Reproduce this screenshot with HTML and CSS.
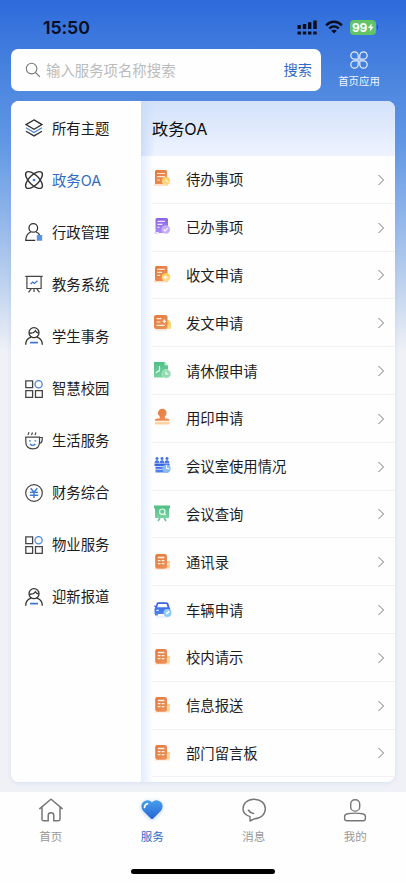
FILE: index.html
```
<!DOCTYPE html>
<html lang="zh-CN">
<head>
<meta charset="utf-8">
<meta name="viewport" content="width=device-width, initial-scale=1">
<title>服务</title>
<link rel="stylesheet" href="styles.css">
</head>
<body>
<svg class="defs" width="0" height="0" aria-hidden="true">
  <defs>
    <linearGradient id="orange" x1="0" y1="0" x2="1" y2="1"><stop offset="0" stop-color="#e3793c"/><stop offset="1" stop-color="#f0925a"/></linearGradient>
    <linearGradient id="yellow" x1="0" y1="0" x2="0" y2="1"><stop offset="0" stop-color="#ffc94d"/><stop offset="1" stop-color="#ffdc92"/></linearGradient>
    <linearGradient id="purple" x1="0" y1="0" x2="0" y2="1"><stop offset="0" stop-color="#8a63e6"/><stop offset="1" stop-color="#ab8af5"/></linearGradient>
    <linearGradient id="green" x1="0" y1="0" x2="0" y2="1"><stop offset="0" stop-color="#4fbe85"/><stop offset="1" stop-color="#7ad3a3"/></linearGradient>
    <linearGradient id="blue" x1="0" y1="0" x2="0" y2="1"><stop offset="0" stop-color="#3462dc"/><stop offset="1" stop-color="#5185ee"/></linearGradient>
    <linearGradient id="heart" x1="0" y1="0" x2="0" y2="1"><stop offset="0" stop-color="#46a0ee"/><stop offset="1" stop-color="#2863d2"/></linearGradient>
    <symbol id="person" viewBox="0 0 18 18"><g fill="none" stroke="#333" stroke-width="1.3"><circle cx="9" cy="5.7" r="5"/><path d="M4.3 6.2C7 6.5 9.3 5.5 10.4 3.8c.7 1.5 1.8 2 3.2 2.2M.7 17.7c0-4 2-6.3 5.3-7.5M17.3 17.7c0-4-2-6.3-5.3-7.5"/></g><path d="M5 15.6h8" stroke="#3e73d3" stroke-width="1.7"/></symbol>
    <symbol id="grid" viewBox="0 0 18 18"><g fill="none" stroke="#444" stroke-width="1.3"><path d="M.8.8h6.8v6.9H.8zM.8 10.6h6.8v6.8H.8zM10.5 10.6h6.8v6.8h-6.8z"/><circle cx="13.6" cy="4.2" r="3.6" stroke="#4d86dc"/></g></symbol>
    <symbol id="news" viewBox="0 0 20 20"><path d="M2 17h16" stroke="#fff0e5" stroke-width="2"/><path d="M14 9h4v5.5a2 2 0 0 1-4 0z" fill="#ffd08a"/><rect x="3.2" y="2" width="11.8" height="14.8" rx="2.2" fill="url(#orange)"/><path d="M5.8 5.5h6.6M5.8 8.7h2.7M9.7 8.7h2.7M5.8 11.6h2.7M9.7 11.6h2.7" stroke="#fff2e8" stroke-width="1.3"/><path d="M16 11v3" stroke="#fff1d4"/></symbol>
    <symbol id="chevron" viewBox="0 0 8 14"><path d="M1.5 2 6.500 7l-5 5" fill="none" stroke="#777" stroke-width="1"/></symbol>
  </defs>
</svg>
<div class="app">
  <header class="status">
    <span class="time">15:50</span>
    <svg class="signal" viewBox="0 0 21 15"><path d="M2.2 5v4M7.500 4v5M12.700 2.300V9M18 .5V9M2.200 11.400v3M7.500 11.400v3M12.700 11.400v3M18 11.400v3" stroke="#080e1e" stroke-width="3.4"/></svg>
    <svg class="wifi" viewBox="0 0 18 14"><g fill="none" stroke="#080e1e" stroke-width="2.4"><path d="M1.200 5.400C5.600.6 12.400.6 16.800 5.400"/><path d="M4.300 8.500c2.800-2.800 6.600-2.800 9.400 0"/></g><path d="m6.200 10.800 2.800 2.800 2.800-2.800c-1.600-1.500-4-1.500-5.600 0z" fill="#080e1e"/></svg>
    <div class="battery"><span>99</span><svg viewBox="0 0 7 10"><path d="M4.300 0 0 5.700h2.700L2 10l4.700-6H4z" fill="#fff"/></svg></div>
  </header>

  <div class="top">
    <div class="search">
      <svg viewBox="0 0 16 16"><g fill="none" stroke="#777" stroke-width="1.1"><circle cx="6.6" cy="6.6" r="5.3"/><path d="m10.5 10.5 4.4 4.4"/></g></svg>
      <span class="placeholder">输入服务项名称搜索</span>
      <span class="go">搜索</span>
    </div>
    <div class="home-apps">
      <svg viewBox="0 0 18 18"><g fill="none" stroke="#e6effc" stroke-width="1.2"><path d="M8.2 8.2H4.5A3.7 3.7 0 1 1 8.2 4.5zM9.8 8.2h3.7a3.7 3.7 0 1 0-3.7-3.7zM8.2 9.8H4.5a3.7 3.7 0 1 0 3.7 3.7zM9.8 9.8h3.7a3.7 3.7 0 1 1-3.7 3.7z"/></g></svg>
      <span>首页应用</span>
    </div>
  </div>

  <main class="card">
    <nav class="themes">
      <div class="theme"><svg viewBox="0 0 18 18"><g fill="none" stroke-width="1.3"><path d="M9 .9 17 5.6 9 10.3 1 5.6z" stroke="#333"/><path d="m1 8.8 8 4.7 8-4.7" stroke="#4d86dc"/><path d="m1 12.2 8 4.7 8-4.7" stroke="#333"/></g></svg><span>所有主题</span></div>
      <div class="theme active"><svg viewBox="0 0 18 18"><g fill="none" stroke="#333" stroke-width="1.4"><ellipse cx="9" cy="9" rx="10.8" ry="4.9" transform="rotate(45 9 9)"/><ellipse cx="9" cy="9" rx="10.8" ry="4.9" transform="rotate(-45 9 9)"/></g><circle cx="9" cy="9" r="1.3" fill="#3d78dc"/></svg><span>政务OA</span></div>
      <div class="theme"><svg viewBox="0 0 18 18"><g fill="none" stroke="#333" stroke-width="1.3"><circle cx="8.3" cy="4.9" r="4.3"/><path d="M5.7 9C2.7 10.4.8 13 .8 17.3h9.5M11 9c1.7.6 2.8 1.5 3.6 2.8"/></g><path d="M11.8 12h5.4v5.8h-5.4z" fill="#5d91df"/></svg><span>行政管理</span></div>
      <div class="theme"><svg viewBox="0 0 18 18"><g fill="none" stroke="#444" stroke-width="1.2"><path d="M.3 1.3h17.4M1.9 1.3v12.2h14.2V1.3M6.2 13.8l-2.7 3.6M11.8 13.8l2.7 3.6M9 14v3"/><path d="m5.700 9 2-1.900 1.700 1.400 3-2.700" stroke="#3e73d3" stroke-width="1.300"/></g></svg><span>教务系统</span></div>
      <div class="theme"><svg><use href="#person"/></svg><span>学生事务</span></div>
      <div class="theme"><svg><use href="#grid"/></svg><span>智慧校园</span></div>
      <div class="theme"><svg viewBox="0 0 18 18"><g fill="none" stroke="#444" stroke-width="1.2"><path d="M.8 5.200h13.700v4.800c0 4.200-2.400 6.900-6.800 6.900S.8 14.200.8 10zM14.500 5.500h2.700v2.300c0 2-1 3.300-3 3.500M3 2.900 4 .3M6.500 3.100 7.500.5M10 3.100 11 .5"/><path d="M4 8.900h1.800M9.500 8.900h1.800M5 12c1.500 1.800 3.800 1.800 5.300 0" stroke="#3e7ee0" stroke-width="1.300"/></g></svg><span>生活服务</span></div>
      <div class="theme"><svg viewBox="0 0 18 18"><g fill="none"><circle cx="9" cy="9" r="8.300" stroke="#444" stroke-width="1.200"/><path d="m5.700 4.300 3.300 4 3.300-4M9 8.300v5.800M4.800 8.400h8.400M4.800 11.200h8.400" stroke="#3e7ad8" stroke-width="1.400"/></g></svg><span>财务综合</span></div>
      <div class="theme"><svg><use href="#grid"/></svg><span>物业服务</span></div>
      <div class="theme"><svg><use href="#person"/></svg><span>迎新报道</span></div>
    </nav>

    <section class="services">
      <h1>政务OA</h1>
      <ul>
        <li><svg class="icon" viewBox="0 0 20 20"><path d="M2 16h14" stroke="#ffe1cb" stroke-width="2"/><path d="M4.500 1h9a1.500 1.500 0 0 1 1.500 1.500V15H3V2.500A1.500 1.500 0 0 1 4.500 1z" fill="url(#orange)"/><path d="M5 4.500h8M5 7.700h8M5 11h3" stroke="#ffe8d8" stroke-width="1.200"/><circle cx="14" cy="12" r="4.200" fill="url(#yellow)"/><path d="M14 9.500v2.700h2.300" fill="none" stroke="#fff"/></svg><span>待办事项</span><svg class="chevron"><use href="#chevron"/></svg></li>
        <li><svg class="icon" viewBox="0 0 20 20"><path d="M5 1h9.500a1.500 1.500 0 0 1 1.500 1.500V16H3.500V2.500A1.500 1.500 0 0 1 5 1z" fill="url(#purple)"/><path d="M2 15h5v2H2z" fill="#e6dbff"/><path d="M5.500 4.300h7.500M5.500 7.300h5M5.500 10.300h2" stroke="#ede5ff" stroke-width="1.200"/><circle cx="13.700" cy="12.500" r="4.300" fill="#c5aef8"/><path d="m11.800 12.500 1.400 1.500 2.700-3" fill="none" stroke="#fff" stroke-width="1.100"/></svg><span>已办事项</span><svg class="chevron"><use href="#chevron"/></svg></li>
        <li><svg class="icon" viewBox="0 0 20 20"><path d="M2 16.500h14" stroke="#ffe1cb" stroke-width="2"/><rect x="3" y="1" width="12.500" height="15" rx="1.500" fill="url(#orange)"/><path d="M5.200 4.300h7.500M5.200 7.300h5M5.200 10.300h3" stroke="#ffe8d8" stroke-width="1.200"/><circle cx="14" cy="12.300" r="4.200" fill="url(#yellow)"/><path d="M16.500 12.300h-4.300m2-2-2 2 2 2" fill="none" stroke="#fff" stroke-width="1.100"/></svg><span>收文申请</span><svg class="chevron"><use href="#chevron"/></svg></li>
        <li><svg class="icon" viewBox="0 0 20 20"><path d="M3 17h12" stroke="#ffe6d4" stroke-width="1.500"/><path d="M14.500 7h2l2.500 2.500V16h-4.500z" fill="url(#yellow)"/><rect x="2" y="2" width="13.500" height="14" rx="2.200" fill="url(#orange)"/><path d="M4.500 5.700h5M4.500 9h4M4.500 12.300h8M10.500 8.300H14M12.300 6.500v3.600" stroke="#fff0e4" stroke-width="1.200"/></svg><span>发文申请</span><svg class="chevron"><use href="#chevron"/></svg></li>
        <li><svg class="icon" viewBox="0 0 20 20"><path d="M2 1h10.500L16 4.500v12H2z" fill="url(#green)"/><path d="M12.500 1v3.500H16" fill="#b9e9ce"/><path d="m4.500 11.500 2-1.500M7.500 10V5.500" stroke="#e9fff2" stroke-width="1.200" stroke-linecap="round"/><circle cx="14.500" cy="12.800" r="4.300" fill="#90dab0" stroke="#d9f6e5" stroke-width=".6"/><path d="M14 10.500V13h2.500" fill="none" stroke="#fff" stroke-width="1.100"/></svg><span>请休假申请</span><svg class="chevron"><use href="#chevron"/></svg></li>
        <li><svg class="icon" viewBox="0 0 20 20"><path d="M7.700 10.500V8.300C6.300 7.300 6 6.200 6 5a4.300 4.300 0 0 1 8.600 0c0 1.300-.5 2.500-1.700 3.300v2.200H15c1.700 0 2.500.8 2.500 2.300H3c0-1.500.8-2.300 2.500-2.300z" fill="url(#orange)"/><path d="M3 13.700h14.500v2.800H3z" fill="#ffd29f"/></svg><span>用印申请</span><svg class="chevron"><use href="#chevron"/></svg></li>
        <li><svg class="icon" viewBox="0 0 20 20"><g fill="url(#blue)"><circle cx="5" cy="2.500" r="1.500"/><circle cx="10" cy="2.500" r="1.500"/><circle cx="15" cy="2.500" r="1.500"/><path d="M2.700 7q0-2.800 2.300-2.800T7.300 7zM7.700 7q0-2.800 2.300-2.800T12.300 7zM12.700 7q0-2.800 2.300-2.800T17.300 7z"/><path d="M2.500 7.500h15v2.500h-15zM3.500 10.800h12.500v5.700H3.500z"/></g><path d="M3 13.300h8" stroke="#c9d8ff"/><circle cx="14.500" cy="12.700" r="4.200" fill="#8abaf8"/><path d="M14.500 9.500v3.200h3" fill="none" stroke="#fff"/></svg><span>会议室使用情况</span><svg class="chevron"><use href="#chevron"/></svg></li>
        <li><svg class="icon" viewBox="0 0 20 20"><path d="M2 1.500h16v3H2zM3 4h14v10H3z" fill="url(#green)"/><path d="m8 14-2 3M12 14l2 3" stroke="#66c493" stroke-width="1.600"/><circle cx="10.300" cy="7.700" r="2.700" fill="none" stroke="#e9fff2" stroke-width="1.100"/><path d="m12.300 9.700 1.500 1.500" stroke="#e9fff2" stroke-width="1.200"/></svg><span>会议查询</span><svg class="chevron"><use href="#chevron"/></svg></li>
        <li><svg class="icon"><use href="#news"/></svg><span>通讯录</span><svg class="chevron"><use href="#chevron"/></svg></li>
        <li><svg class="icon" viewBox="0 0 20 20"><path d="M4 17h11" stroke="#e5eeff" stroke-width="1.500"/><path fill-rule="evenodd" d="M6 2.200h8.500q1.500 0 2 1.500l1 3.500q.8.800.8 2.300v4.500h-2.500v1.500h-2V14H6v1.500H3V14h-.5V9.500q0-1.500.9-2.300L2 6.500l.4-1 1.500.3.700-2.200Q5 2.200 6 2.200zM6.200 3.900 5.200 7.200h10.300l-1-3.300z" fill="url(#blue)"/><path d="M4.500 10.300h2.200M13.500 10.300h2" stroke="#fff" stroke-width="1.300"/><circle cx="15.500" cy="13" r="4" fill="#8fcdf8"/><path d="m13.900 14.600.2-1.500 2.300-2.300 1.200 1.200-2.300 2.300z" fill="#fff"/></svg><span>车辆申请</span><svg class="chevron"><use href="#chevron"/></svg></li>
        <li><svg class="icon"><use href="#news"/></svg><span>校内请示</span><svg class="chevron"><use href="#chevron"/></svg></li>
        <li><svg class="icon"><use href="#news"/></svg><span>信息报送</span><svg class="chevron"><use href="#chevron"/></svg></li>
        <li><svg class="icon"><use href="#news"/></svg><span>部门留言板</span><svg class="chevron"><use href="#chevron"/></svg></li>
      </ul>
    </section>
  </main>

  <footer class="tabbar">
    <div class="tabs">
      <div class="tab"><svg viewBox="0 0 28 28"><path d="M2.800 12.600 13.300 3.700q.7-.6 1.400 0l10.500 8.900M5 11v12.300q0 1.400 1.400 1.400h4.800v-5.200q0-2.700 2.800-2.700t2.800 2.700v5.200h4.800q1.400 0 1.400-1.400V11" fill="none" stroke="#777" stroke-width="1.500" stroke-linecap="round"/></svg><span>首页</span></div>
      <div class="tab active"><svg class="heart" viewBox="0 0 28 28"><path d="M14 6.500C11.500 3 6.800 3.700 4.700 6.600c-2 2.800-1.500 6 .8 8.600l7.300 7.300q1.200 1.200 2.400 0l7.300-7.300c2.300-2.600 2.800-5.800.8-8.600C21.200 3.700 16.500 3 14 6.500z" fill="url(#heart)"/><path d="M6.500 11.500c.1-2.100 1-3.300 3-3.800" fill="none" stroke="#fff" stroke-width="1.700" stroke-linecap="round"/></svg><span>服务</span></div>
      <div class="tab"><svg viewBox="0 0 28 28"><g fill="none" stroke="#777" stroke-width="1.400" stroke-linejoin="round"><path d="M10 20.600C5.800 19.300 3 16.400 3 12.800 3 7.300 7.500 3.200 14 3.200s11.300 4 11.300 9.500S21 22.500 14.800 22.700L10 25z"/><path d="M8.500 14.300c1.300 2 2.700 3 5 3.200" stroke-width="1.700" stroke-linecap="round"/></g></svg><span>消息</span></div>
      <div class="tab"><svg viewBox="0 0 28 28"><g fill="none" stroke="#777" stroke-width="1.400"><rect x="9.700" y="3.700" width="9" height="11.400" rx="4.200"/><path d="M6.500 17.800q7.500-1.400 15 0 2.900.4 2.900 2.900v1.700q0 2.300-2.300 2.300H5.900q-2.300 0-2.300-2.300v-1.700q0-2.500 2.900-2.900z"/></g></svg><span>我的</span></div>
    </div>
    <div class="indicator"></div>
  </footer>
</div>
</body>
</html>
```
FILE: styles.css
```
* { box-sizing: border-box; }
body { margin: 0; font-family: "Noto Sans CJK SC", sans-serif; color: #1c1c1e; }
svg { display: block; flex: none; }
.defs { position: absolute; }
.app {
  width: 406px;
  height: 883px;
  overflow: hidden;
  display: flex;
  flex-direction: column;
  background: linear-gradient(180deg, #2e6bdb 0, #4a84df 75px, #6298e4 145px, #92b7ea 220px, #c2d5ef 290px, #eff1f6 352px);
}

.status { height: 49px; display: flex; align-items: center; padding: 6px 28px 0 43px; }
.time { width: 254px; font: 600 17.800px/22px Inter, sans-serif; color: #080e1e; letter-spacing: -.1px; }
.signal { width: 21px; height: 15px; margin-top: 0; }
.wifi { width: 18px; height: 14px; margin: -1px 0 0 7px; }
.battery {
  position: relative;
  width: 26px;
  height: 15px;
  margin: -1px 0 0 7px;
  border-radius: 4px;
  background: #62c466;
  display: flex;
  align-items: center;
  justify-content: center;
  gap: 1px;
  color: #fff;
  font: 700 12px/15px Inter, sans-serif;
  letter-spacing: -.3px;
}
.battery svg { width: 6px; height: 9px; }
.battery::after { content: ""; position: absolute; right: -2px; top: 5px; width: 1px; height: 4px; background: #2c4d96; }

.top { height: 42px; margin-left: 11px; display: flex; }
.search { width: 310px; border-radius: 7px; background: #fefefe; display: flex; align-items: center; padding: 0 9px 0 14px; }
.search svg { width: 16px; height: 16px; margin-right: 5px; }
.search span { margin-top: -2px; }
.placeholder { flex: 1; font-size: 14.400px; color: #bbb; }
.go { font-size: 14.200px; color: #2f6bc8; }
.home-apps { width: 76px; display: flex; flex-direction: column; align-items: center; padding-top: 2px; color: #f0f5fd; }
.home-apps svg { width: 18px; height: 18px; }
.home-apps span { font-size: 10.400px; line-height: 16px; margin-top: 4px; }

.card { width: 384px; height: 681px; margin: 10px 0 0 11px; border-radius: 8px; background: #fefefe; display: flex; box-shadow: 0 1px 4px rgba(100, 140, 220, .16); overflow: hidden; }
.themes { width: 130px; flex: none; background: #fefefe; padding-top: 1px; }
.theme { height: 52.100px; display: flex; align-items: center; padding-left: 14px; gap: 9px; font-family: Inter, "Noto Sans CJK SC", sans-serif; font-size: 14.350px; }
.theme span { margin-top: 1px; line-height: 22px; }
.theme svg { width: 18px; height: 18px; overflow: visible; }
.theme.active { color: #2f6bc8; }

.services { flex: 1; background: linear-gradient(90deg, #e2edfd 0, rgba(255, 255, 255, 0) 12px); }
.services h1 { height: 55px; margin: 0; padding: 0 11px; background: linear-gradient(90deg, #cbddfa 0, rgba(220, 232, 252, 0) 14px), linear-gradient(180deg, #d3e1fb 0, #eef3fe 100%); font-family: Inter, "Noto Sans CJK SC", sans-serif; font-size: 16.200px; line-height: 56px; font-weight: 400; color: #0b0b0d; }
.services ul { list-style: none; margin: 0; padding: 0 0 0 11px; }
.services li { height: 47.800px; display: flex; align-items: center; border-bottom: 1px solid #f2f2f4; font-size: 14.350px; }
.services li span { flex: 1; margin: -1px 0 0 14px; }
.icon { width: 20px; height: 20px; }
.services .chevron { width: 8px; height: 14px; margin: 1px 10px 0 0; }

.tabbar { flex: 1; margin-top: 10px; background: #fefefe; }
.tabs { display: flex; }
.tab { flex: 1; display: flex; flex-direction: column; align-items: center; padding-top: 4px; font-size: 11.500px; line-height: 18px; color: #999; }
.tab svg { width: 28px; height: 28px; margin-bottom: 3px; }
.tab .heart { filter: drop-shadow(0 1px 2px rgba(60, 130, 230, .35)); }
.tab.active { color: #2f6bc8; }
.indicator { width: 144px; height: 5px; margin: 24px 0 0 131px; border-radius: 3px; background: #000; }
```
